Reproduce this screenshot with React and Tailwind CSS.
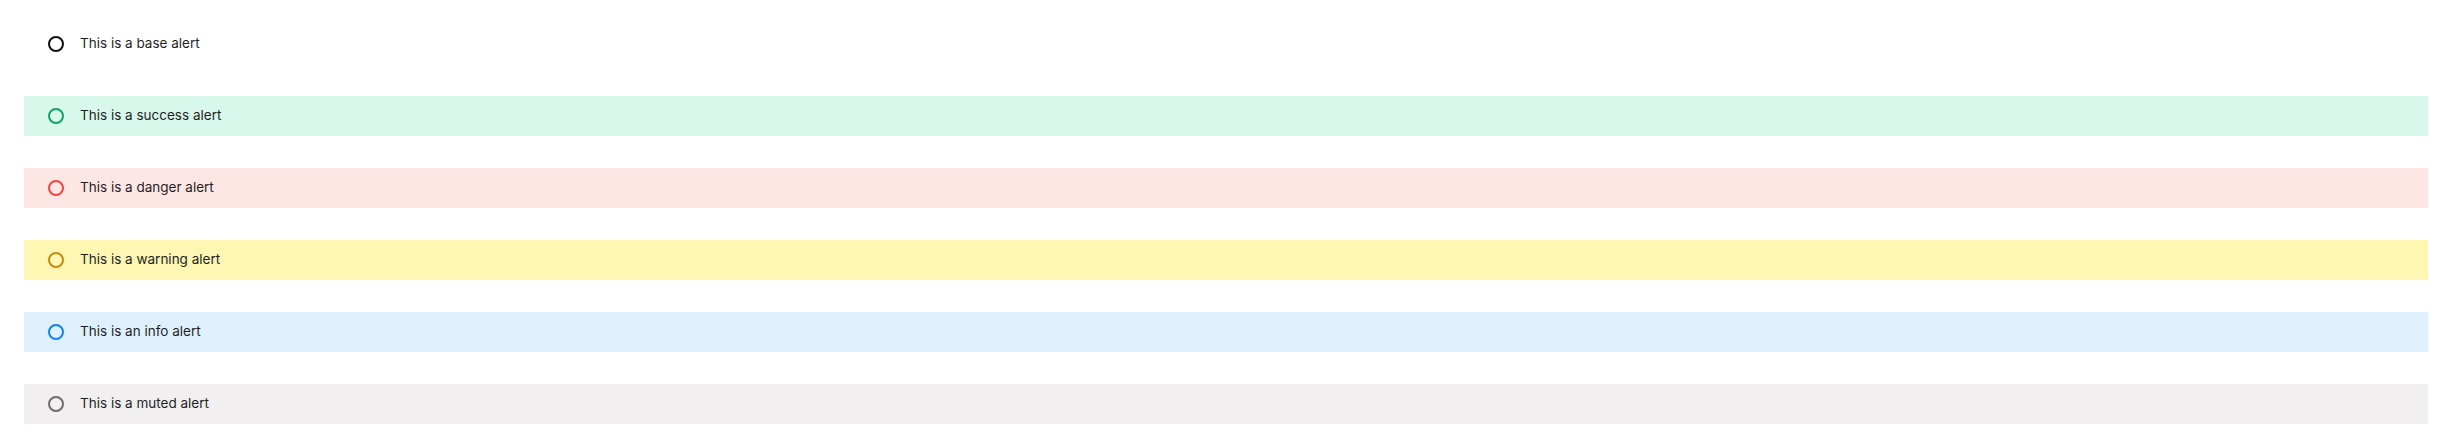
import React from "react";

const alerts = [
  { text: "This is a base alert", bg: "bg-white", ring: "border-[#111111]" },
  { text: "This is a success alert", bg: "bg-[#d9f8ec]", ring: "border-[#14a06a]" },
  { text: "This is a danger alert", bg: "bg-[#fee6e5]", ring: "border-[#f0473c]" },
  { text: "This is a warning alert", bg: "bg-[#fef7b4]", ring: "border-[#c98a12]" },
  { text: "This is an info alert", bg: "bg-[#dff1fe]", ring: "border-[#1283e6]" },
  { text: "This is a muted alert", bg: "bg-[#f1eff0]", ring: "border-[#6f6c6d]" },
];

function Alert({ text, bg, ring }) {
  return (
    <div className={`flex h-10 items-center gap-4 px-6 ${bg}`}>
      <span className={`h-4 w-4 shrink-0 rounded-full border-2 ${ring}`} />
      <span className="text-[13.5px] leading-none text-[#1f1f1f]">{text}</span>
    </div>
  );
}

export default function App() {
  return (
    <div
      className="flex min-h-screen flex-col gap-8 bg-white p-6"
      style={{ fontFamily: "Inter, 'Noto Sans', sans-serif" }}
    >
      {alerts.map((a) => (
        <Alert key={a.text} {...a} />
      ))}
    </div>
  );
}
